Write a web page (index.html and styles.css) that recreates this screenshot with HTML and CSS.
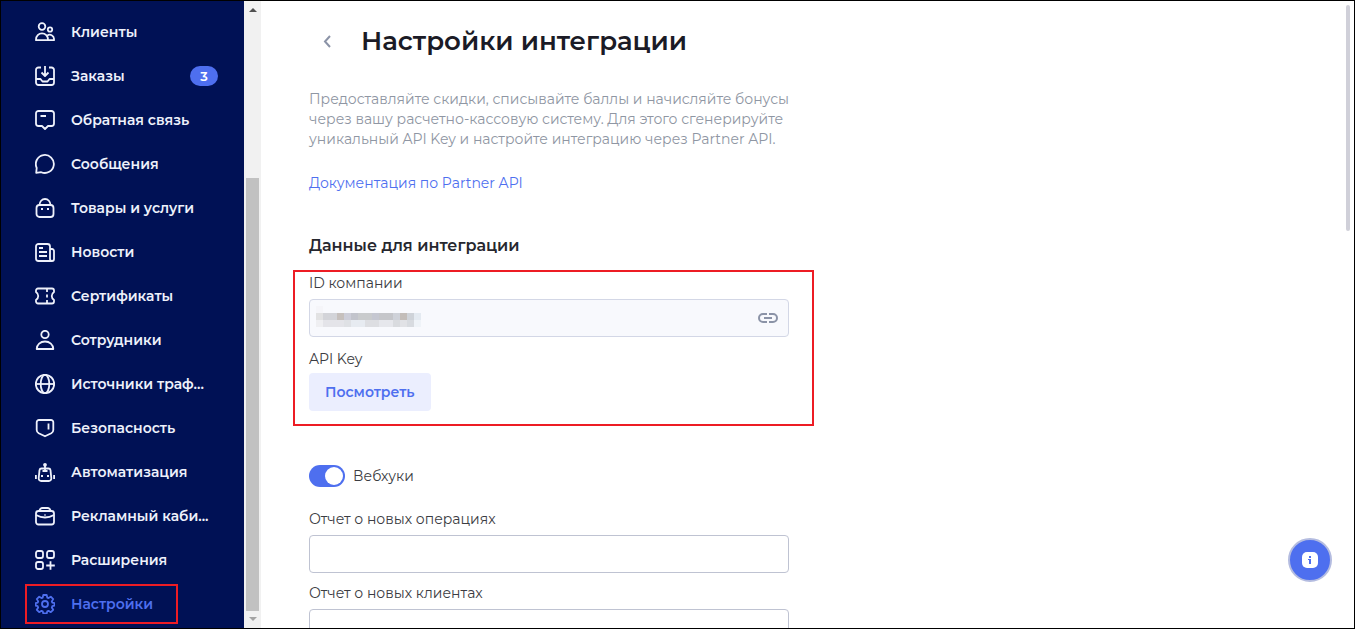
FILE: index.html
```
<!DOCTYPE html>
<html lang="ru">
<head>
    <meta charset="UTF-8">
    <meta name="viewport" content="width=device-width, initial-scale=1.0">
    <title>Настройки интеграции</title>
    <link rel="stylesheet" href="styles.css">
</head>
<body>
    <aside class="sidebar">
        <nav class="menu">
            <a href="#" class="menu-item">
                <svg class="icon" viewBox="0 0 20 20"><circle cx="7" cy="4.5" r="3.3"/><circle cx="15" cy="7.5" r="2.2"/><path d="M1 18.2v-.8a6 6 0 0 1 12 0v.8zM13 18.2h6v-1.4a4.2 4.2 0 0 0-6.6-3.3"/></svg>
                <span>Клиенты</span>
            </a>
            <a href="#" class="menu-item">
                <svg class="icon" viewBox="0 0 20 20"><path d="M6 1.5H3.5A2.5 2.5 0 0 0 1 4v12.5A2.5 2.5 0 0 0 3.5 19h13a2.5 2.5 0 0 0 2.5-2.5V4a2.5 2.5 0 0 0-2.5-2.5H14M10 0v9.5M6.5 6.5 10 10l3.5-3.5M1 13h4.5l2 2.5h5l2-2.5H19"/></svg>
                <span>Заказы</span>
                <span class="badge">3</span>
            </a>
            <a href="#" class="menu-item">
                <svg class="icon" viewBox="0 0 20 20"><path d="M3.5 1h13A2.5 2.5 0 0 1 19 3.5v10a2.5 2.5 0 0 1-2.5 2.5H13l-3 3-3-3H3.5A2.5 2.5 0 0 1 1 13.500v-10A2.5 2.5 0 0 1 3.5 1zM5.5 6H11"/></svg>
                <span>Обратная связь</span>
            </a>
            <a href="#" class="menu-item">
                <svg class="icon" viewBox="0 0 20 20"><path d="M1.200 18.800l.5-5A9 9 0 1 1 6.200 18.200z"/></svg>
                <span>Сообщения</span>
            </a>
            <a href="#" class="menu-item">
                <svg class="icon" viewBox="0 0 20 20"><rect x="1.5" y="7" width="17" height="12" rx="3"/><path d="M4.500 7a5.5 6 0 0 1 11 0M6 11h2M12 11h2"/></svg>
                <span>Товары и услуги</span>
            </a>
            <a href="#" class="menu-item">
                <svg class="icon" viewBox="0 0 20 20"><path d="M15 19H3.500A2.500 2.500 0 0 1 1 16.500v-12A2.500 2.500 0 0 1 3.500 2h9A2.500 2.500 0 0 1 15 4.500V17a2 2 0 0 0 4 0V9a2 2 0 0 0-2-2h-2M17 19h-2M4 6h4M4 10h8M4 14h8"/></svg>
                <span>Новости</span>
            </a>
            <a href="#" class="menu-item">
                <svg class="icon" viewBox="0 0 20 20"><path d="M3 2.500h14a2 2 0 0 1 2 2V6c-3 2-3 6 0 8v1.500a2 2 0 0 1-2 2H3a2 2 0 0 1-2-2V14c3-2 3-6 0-8V4.500a2 2 0 0 1 2-2zM12 3v3M12 8.500v3M12 14v3"/></svg>
                <span>Сертификаты</span>
            </a>
            <a href="#" class="menu-item">
                <svg class="icon" viewBox="0 0 20 20"><circle cx="10" cy="4.500" r="3.700"/><path d="M1.700 19c0-4.500 3.700-7.500 8.300-7.500s8.300 3 8.300 7.500z"/></svg>
                <span>Сотрудники</span>
            </a>
            <a href="#" class="menu-item">
                <svg class="icon" viewBox="0 0 20 20"><circle cx="10" cy="10" r="9.200"/><ellipse cx="10" cy="10" rx="4.300" ry="9.200"/><path d="M1 10h18"/></svg>
                <span>Источники траф...</span>
            </a>
            <a href="#" class="menu-item">
                <svg class="icon" viewBox="0 0 20 20"><path d="M4 2h12a2.300 2.300 0 0 1 2.300 2.300V12c0 1.500-.6 2.500-2 3.300L10 18.300l-6.300-3c-1.400-.8-2-1.800-2-3.300V4.300A2.300 2.300 0 0 1 4 2zM13.500 5.500v6"/></svg>
                <span>Безопасность</span>
            </a>
            <a href="#" class="menu-item">
                <svg class="icon" viewBox="0 0 20 20"><circle cx="10" cy="2.800" r="1" fill="currentColor"/><path d="M10 3v6M6.500 6.500h7a2 2 0 0 1 2 1.700l.8 8a2.500 2.500 0 0 1-2.500 2.800H6.200a2.500 2.500 0 0 1-2.500-2.800l.8-8a2 2 0 0 1 2-1.700zM7.500 9h5M6 14h2M12 14h2M.9 13v4M19.100 13v4"/></svg>
                <span>Автоматизация</span>
            </a>
            <a href="#" class="menu-item">
                <svg class="icon" viewBox="0 0 20 20"><rect x="1" y="5" width="18" height="13.500" rx="2.500"/><path d="M4.500 5a3 3 0 0 1 3-3h5a3 3 0 0 1 3 3M1 9q9 5 18 0M9.500 9h1"/></svg>
                <span>Рекламный каби...</span>
            </a>
            <a href="#" class="menu-item">
                <svg class="icon" viewBox="0 0 20 20"><rect x="1" y="1" width="7" height="7" rx="2"/><rect x="12" y="1" width="7" height="7" rx="2"/><rect x="1" y="12" width="7" height="7" rx="2"/><path d="M15.500 11.200v8.600M11.200 15.500h8.600"/></svg>
                <span>Расширения</span>
            </a>
            <a href="#" class="menu-item active">
                <svg class="icon" viewBox="0 0 20 20"><path d="M8.300 1h3.400l.6 2.600 1.200.5 2.300-1.400 2.400 2.400-1.400 2.300.5 1.200 2.200.6v2.400l-2.200.6-.5 1.300 1.400 2.300-2.400 2.400-2.300-1.400-1.200.5-.6 2.200H8.300l-.6-2.200-1.200-.5-2.300 1.400-2.400-2.400 1.400-2.300-.5-1.300-2-.6V9.200l2-.6.5-1.200-1.400-2.300 2.400-2.400 2.300 1.400 1.200-.5z"/><circle cx="10" cy="10" r="3"/></svg>
                <span>Настройки</span>
            </a>
        </nav>
        <div class="scrollbar">
            <svg class="arrow" viewBox="0 0 17 17"><path d="M5 11h8L9 7z"/></svg>
            <div class="thumb"></div>
            <svg class="arrow arrow-end" viewBox="0 0 17 17"><path d="M5 6h8l-4 4z"/></svg>
        </div>
    </aside>

    <main class="content">
        <header class="title">
            <button type="button" class="back" aria-label="Назад">
                <svg viewBox="0 0 8 14"><path d="M7 2 2 7.500 7 13"/></svg>
            </button>
            <h1>Настройки интеграции</h1>
        </header>

        <p class="description">Предоставляйте скидки, списывайте баллы и начисляйте бонусы через вашу расчетно-кассовую систему. Для этого сгенерируйте уникальный API Key и настройте интеграцию через Partner API.</p>
        <a href="#" class="docs">Документация по Partner API</a>

        <h2>Данные для интеграции</h2>
        <section class="highlight">
            <label for="company-id">ID компании</label>
            <div class="field field-readonly">
                <!-- Скрытый ID -->
                <svg class="masked" viewBox="0 0 15 3" shape-rendering="crispEdges">
                    <path fill="#f5f5f9" d="M0 0h1v1H0z"/>
                    <path fill="#e2e2e3" d="M0 1h1v1H0z"/><path fill="#d3d4d9" d="M1 1h2v1H1z"/><path fill="#c6c0bd" d="M3 1h1v1H3z"/><path fill="#cdced9" d="M4 1h1v1H4z"/><path fill="#c2c4cc" d="M5 1h1v1H5z"/><path fill="#c9cbcd" d="M6 1h2v1H6z"/><path fill="#c5c7d1" d="M8 1h1v1H8z"/><path fill="#c5c6ca" d="M9 1h2v1H9z"/><path fill="#cfd2d9" d="M11 1h1v1h-1z"/><path fill="#c3bdb9" d="M12 1h1v1h-1z"/><path fill="#cfd3d9" d="M13 1h1v1h-1z"/><path fill="#e4eaf1" d="M14 1h1v1h-1z"/>
                    <path fill="#efeff2" d="M0 2h1v1H0z"/><path fill="#e4e4e9" d="M1 2h3v1H1z"/><path fill="#dfe1e5" d="M4 2h1v1H4z"/><path fill="#e7ebf1" d="M5 2h2v1H5z"/><path fill="#dddee2" d="M7 2h2v1H7z"/><path fill="#e6e7ec" d="M9 2h2v1H9z"/><path fill="#d9dbdf" d="M11 2h1v1h-1z"/><path fill="#e1e2e6" d="M12 2h1v1h-1z"/><path fill="#d8dbe0" d="M13 2h1v1h-1z"/><path fill="#eff3f8" d="M14 2h1v1h-1z"/>
                </svg>
                <input type="text" id="company-id" readonly>
                <button type="button" class="copy" aria-label="Скопировать">
                    <svg viewBox="0 0 20 10"><path d="M9 1H5a4 4 0 0 0 0 8h4M11 1h4a4 4 0 0 1 0 8h-4M6 5h8"/></svg>
                </button>
            </div>
            <label for="api-key">API Key</label>
            <button type="button" class="show-key" id="api-key">Посмотреть</button>
        </section>

        <label class="switch">
            <input type="checkbox" checked>
            <span>Вебхуки</span>
        </label>

        <div class="webhooks">
            <label for="operations">Отчет о новых операциях</label>
            <input type="text" id="operations" class="field">
            <label for="clients">Отчет о новых клиентах</label>
            <input type="text" id="clients" class="field">
        </div>
    </main>

    <div class="page-thumb"></div>
    <button type="button" class="help" aria-label="Справка">
        <svg viewBox="0 0 16 16"><rect width="16" height="16" rx="5" fill="#fff"/><path fill="#4e6fef" d="M7 4h2v2H7zM6 7h3v5H7V8H6z"/></svg>
    </button>
</body>
</html>
```

FILE: styles.css
```
* {
    box-sizing: border-box;
}
body {
    position: relative;
    display: flex;
    height: 100vh;
    margin: 0;
    border: 1px solid #000;
    overflow: hidden;
    font-family: Montserrat, Inter, sans-serif;
    font-size: 14px;
    line-height: 20px;
    color: #3b3c42;
    background-color: #fff;
}
button, input {
    font: inherit;
}
button {
    padding: 0;
    border: none;
    background: none;
    cursor: pointer;
}
svg {
    display: block;
    fill: none;
    stroke: currentColor;
}

/* Sidebar */
.sidebar {
    display: flex;
    flex: none;
    width: 260px;
    background-color: #001155;
}
.menu {
    flex: 1;
    padding-top: 9px;
}
.menu-item {
    display: flex;
    align-items: center;
    height: 40px;
    margin: 2px 24px 4px;
    padding: 0 0 0 8px;
    border: 2px solid transparent;
    font-weight: 600;
    color: #eef1fb;
    text-decoration: none;
    white-space: nowrap;
}
.icon {
    flex: none;
    width: 20px;
    height: 20px;
    margin-right: 16px;
    stroke-width: 1.8;
    stroke-linejoin: round;
}
.badge {
    width: 28px;
    margin-left: auto;
    border-radius: 10px;
    font-size: 13px;
    text-align: center;
    color: #fff;
    background-color: #4e6fef;
}
.active {
    width: fit-content;
    padding-right: 23px;
    border-color: #ed1c24;
    color: #4e6fef;
}
.scrollbar {
    display: flex;
    flex-direction: column;
    width: 17px;
    background-color: #f1f1f1;
}
.arrow {
    height: 17px;
    fill: #505050;
    stroke: none;
}
.arrow-end {
    fill: #a3a3a3;
}
.thumb {
    height: 69%;
    min-height: 0;
    margin: auto 2px 0;
    background-color: #c1c1c1;
}

/* Content */
.content {
    flex: 1;
    padding: 20px 48px 0;
}
.title {
    display: flex;
    align-items: center;
    height: 40px;
    margin-bottom: 28px;
}
.back {
    width: 36px;
    height: 36px;
    margin-right: 16px;
    color: #8b93a7;
}
.back svg {
    width: 8px;
    height: 14px;
    margin: 0 auto;
    stroke-width: 2;
}
h1 {
    margin: 0;
    font-size: 26px;
    font-weight: 600;
    color: #1b1b26;
}
.description {
    max-width: 488px;
    margin: 0 0 24px;
    color: #8f96a3;
}
.docs {
    color: #4e6fef;
    text-decoration: none;
}
h2 {
    margin: 43px 0 14px;
    font-size: 16px;
    font-weight: 600;
    color: #26272e;
}
label {
    display: block;
}
.highlight {
    max-width: 521px;
    height: 156px;
    margin: 0 -16px;
    padding: 1px 23px 0 14px;
    border: 2px solid #ed1c24;
}
.field {
    display: block;
    width: 100%;
    height: 38px;
    margin: 6px 0 10px;
    border: 1px solid #bfc3d2;
    border-radius: 4px;
}
.field-readonly {
    display: flex;
    align-items: center;
    margin-bottom: 12px;
    padding: 0 10px 0 6px;
    border-color: #d3d7e6;
    background-color: #f8f9fd;
}
.masked {
    flex: none;
    width: 105px;
    height: 21px;
    margin-bottom: 4px;
    stroke: none;
}
.field-readonly input {
    flex: 1;
    min-width: 0;
    border: none;
    outline: none;
    background: none;
}
.copy svg {
    width: 20px;
    height: 10px;
    color: #8b93a7;
    stroke-width: 2;
}
.show-key {
    display: block;
    height: 38px;
    margin-top: 4px;
    padding: 0 16px;
    border-radius: 4px;
    font-weight: 600;
    color: #4e6fef;
    background-color: #ebeefe;
}
.switch {
    display: flex;
    align-items: center;
    gap: 8px;
    margin: 39px 0 22px;
}
.switch input {
    width: 36px;
    height: 22px;
    margin: 0;
    padding: 2px;
    border-radius: 11px;
    appearance: none;
    background-color: #c5c9d6;
}
.switch input::before {
    content: "";
    display: block;
    width: 18px;
    height: 18px;
    border-radius: 50%;
    background-color: #fff;
}
.switch input:checked {
    background-color: #4e6fef;
}
.switch input:checked::before {
    margin-left: auto;
}
.webhooks {
    max-width: 480px;
}

/* Overlays */
.page-thumb {
    position: absolute;
    top: 4px;
    right: 4px;
    width: 4px;
    height: 36%;
    border-radius: 2px;
    background-color: #d0d0d9;
}
.help {
    position: absolute;
    right: 22px;
    bottom: 46px;
    width: 44px;
    height: 44px;
    border: 2px solid #b4bce0;
    border-radius: 50%;
    background-color: #4e6fef;
}
.help svg {
    width: 16px;
    height: 16px;
    margin: 0 auto;
    stroke: none;
}
```
